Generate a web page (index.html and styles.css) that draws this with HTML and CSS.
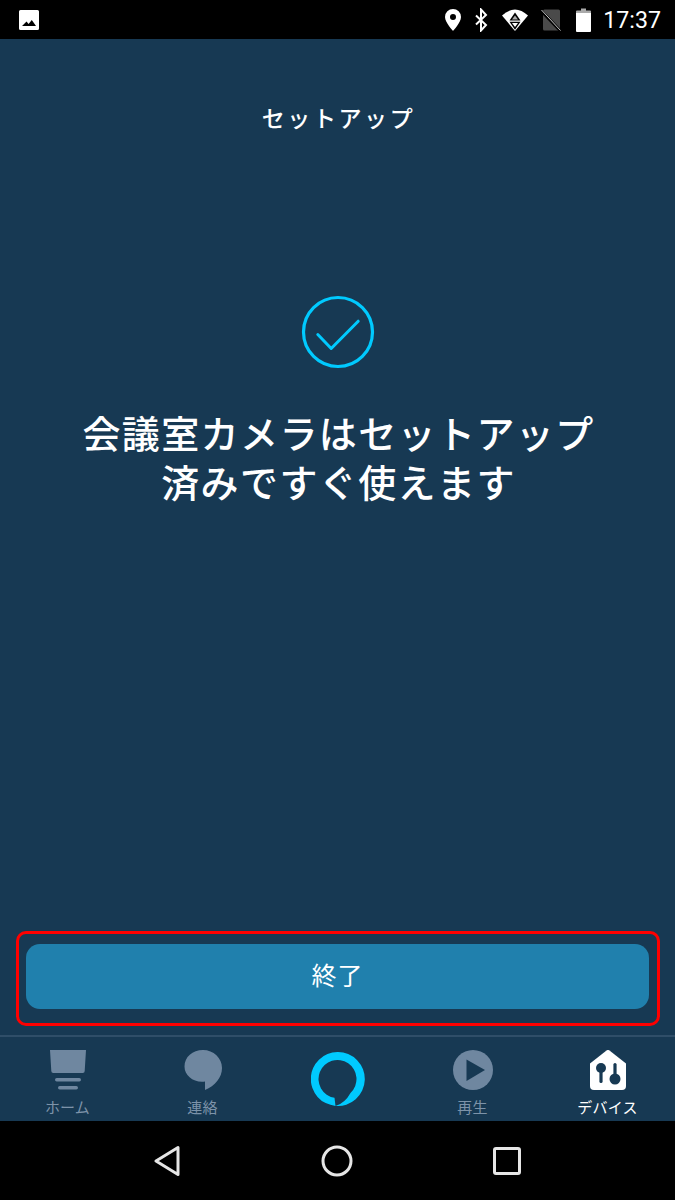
FILE: index.html
```html
<!DOCTYPE html>
<html lang="ja">
<head>
    <meta charset="UTF-8">
    <meta name="viewport" content="width=device-width, initial-scale=1.0">
    <title>セットアップ</title>
    <link rel="stylesheet" href="styles.css">
</head>
<body>

    <!-- Status bar -->
    <div class="status-bar">
        <svg class="status-photo" width="22" height="22" viewBox="0 0 22 22">
            <path fill="#fff" fill-rule="evenodd" d="M2.500 1h17A1.500 1.500 0 0 1 21 2.500v17a1.500 1.500 0 0 1-1.500 1.500h-17A1.500 1.500 0 0 1 1 19.500v-17A1.500 1.500 0 0 1 2.500 1zM4 17h14l-4.200-6-3.200 4-2.100-2.500z"/>
        </svg>
        <div class="status-right">
            <svg width="18" height="24" viewBox="0 0 18 24">
                <path fill="#fff" fill-rule="evenodd" d="M9 1a8 8 0 0 1 8 8c0 5.500-8 14-8 14S1 14.500 1 9a8 8 0 0 1 8-8zm0 5a3 3 0 1 0 0 6 3 3 0 0 0 0-6z"/>
            </svg>
            <svg width="18" height="24" viewBox="0 0 18 24">
                <path fill="none" stroke="#fff" stroke-width="2" d="M4 7.500l10 9.500-5 5.500V1.500l5 5.500L4 16.500"/>
            </svg>
            <svg width="30" height="24" viewBox="0 0 30 24">
                <path fill="#fff" d="M2 7.500Q15-4.500 28 7.500L15 23z"/>
                <path fill="#000" d="M15 4.500l5.500 8h-11zM9.500 13.800h11l-5.500 8z"/>
                <path fill="#aaa" d="M15 7.500l3 4h-6z"/>
                <path fill="#fff" d="M12 15h6l-3 4z"/>
            </svg>
            <svg width="21" height="24" viewBox="0 0 21 24">
                <rect x="3" y="1.500" width="17" height="21" rx="1.500" fill="#4a4a4a"/>
                <path stroke="#000" stroke-width="3" d="M0 1.500l21 22"/>
                <path stroke="#ccc" stroke-width="1" d="M1.500 2l19 20.500"/>
            </svg>
            <svg width="22" height="24" viewBox="0 0 22 24">
                <path fill="#aaa" d="M10 .5h5v2h4a1 1 0 0 1 1 1V6H5V3.500a1 1 0 0 1 1-1h4z"/>
                <path fill="#fff" d="M5 5h15v18a1 1 0 0 1-1 1H6a1 1 0 0 1-1-1z"/>
            </svg>
            <span class="status-time">17:37</span>
        </div>
    </div>

    <!-- Setup finished screen -->
    <div class="main-screen">
        <div class="page-title">セットアップ</div>

        <svg class="check-icon" width="74" height="74" viewBox="0 0 74 74">
            <circle cx="37" cy="37" r="34.500" fill="none" stroke="#00caff" stroke-width="3.200"/>
            <path fill="none" stroke="#00caff" stroke-width="3" stroke-linecap="round" stroke-linejoin="round" d="M16.800 39.500l13.400 14 27-27.300"/>
        </svg>

        <h1 class="headline">会議室カメラはセットアップ<br>済みですぐ使えます</h1>

        <div class="finish-area">
            <div class="finish-outline">
                <button class="finish-btn" type="button">終了</button>
            </div>
        </div>

        <!-- Bottom tabs -->
        <div class="tab-bar">
            <div class="tab">
                <svg width="38" height="42" viewBox="0 0 38 42">
                    <path fill="#6f87a0" d="M1 0h36l-1.300 21a2 2 0 0 1-2 2H4.300a2 2 0 0 1-2-2z"/>
                    <rect x="6" y="28" width="26" height="3.500" rx="1.700" fill="#6f87a0"/>
                    <rect x="9" y="36" width="20" height="3.500" rx="1.700" fill="#6f87a0"/>
                </svg>
                <span class="tab-label">ホーム</span>
            </div>
            <div class="tab">
                <svg width="38" height="42" viewBox="0 -1 38 42">
                    <path fill="#6f87a0" d="M19-1C29.500-1 38 7 38 17 38 26.500 31 35 21 39V30.500C10 32 .5 25 .5 15.500.5 6 8.500-1 19-1z"/>
                </svg>
                <span class="tab-label">連絡</span>
            </div>
            <div class="tab tab-alexa">
                <svg width="54" height="54" viewBox="0.500 0 54 54">
                    <path fill="#00caff" fill-rule="evenodd" d="M27 0a27 27 0 1 1-2 53.900L24 45.800A19 19 0 1 1 40 40.900Q34.500 51 25 53.900A27 27 0 0 1 27 0z"/>
                </svg>
            </div>
            <div class="tab">
                <svg width="40" height="42" viewBox="0 0 40 42">
                    <circle cx="20" cy="20" r="20" fill="#6f87a0"/>
                    <path fill="#173953" d="M13.500 9.500L32 20 13.500 31z"/>
                </svg>
                <span class="tab-label">再生</span>
            </div>
            <div class="tab tab-active">
                <svg width="38" height="42" viewBox="0 0 38 42">
                    <path fill="#fff" d="M17.500.5a2.500 2.500 0 0 1 3 0L37 13.500V36a4 4 0 0 1-4 4H5a4 4 0 0 1-4-4V13.500z"/>
                    <circle cx="12" cy="18" r="5" fill="#173953"/>
                    <rect x="10.400" y="18" width="3.200" height="15" rx="1.600" fill="#173953"/>
                    <circle cx="26" cy="29" r="5.500" fill="#173953"/>
                    <rect x="24.400" y="13" width="3.200" height="16" rx="1.600" fill="#173953"/>
                </svg>
                <span class="tab-label">デバイス</span>
            </div>
        </div>
    </div>

    <!-- Android nav buttons -->
    <div class="nav-bar">
        <svg width="26" height="32" viewBox="0 0 26 32">
            <path fill="none" stroke="#e6e6e6" stroke-width="3" stroke-linejoin="round" d="M24 2.500v27L2 16z"/>
        </svg>
        <svg width="32" height="32" viewBox="0 0 32 32">
            <circle cx="16" cy="16" r="14" fill="none" stroke="#e6e6e6" stroke-width="3"/>
        </svg>
        <svg width="28" height="28" viewBox="0 0 28 28">
            <rect x="1.500" y="1.500" width="25" height="25" rx="1.500" fill="none" stroke="#e6e6e6" stroke-width="3"/>
        </svg>
    </div>

</body>
</html>
```

FILE: styles.css
```css
body {
    font-family: Roboto, "Noto Sans CJK JP", sans-serif;
    margin: 0;
    padding: 0;
    width: 675px;
    height: 1200px;
    display: flex;
    flex-direction: column;
    overflow: hidden;
    background-color: #000;
}

svg {
    display: block;
}

.status-bar {
    height: 39px;
    flex: none;
    display: flex;
    align-items: center;
    justify-content: space-between;
    padding: 0 14px 0 18px;
    background-color: #000;
}

.status-right {
    display: flex;
    align-items: center;
    gap: 10px;
}

.status-time {
    color: #fff;
    font-size: 23.200px;
}

.main-screen {
    flex: 1;
    display: flex;
    flex-direction: column;
    align-items: center;
    background-color: #173953;
}

.page-title {
    margin-top: 64px;
    padding-left: 2px;
    color: #fff;
    font-size: 23px;
    font-weight: 500;
    letter-spacing: 2.600px;
    line-height: 34px;
}

.check-icon {
    margin-top: 158px;
}

.headline {
    margin: 42px 0 0;
    padding-left: 2px;
    color: #fff;
    font-size: 38px;
    font-weight: 500;
    letter-spacing: 1.400px;
    line-height: 49px;
    text-align: center;
}

.finish-area {
    margin-top: auto;
    width: 100%;
    box-sizing: border-box;
    padding: 0 15px 9px 16px;
}

.finish-outline {
    border: 3px solid #f00;
    border-radius: 10px;
    padding: 10px 8px 14px 7px;
}

.finish-btn {
    display: block;
    width: 100%;
    height: 65px;
    padding: 0 0 6px;
    border: none;
    border-radius: 14px;
    background-color: #2080ad;
    color: #fff;
    font-family: inherit;
    font-size: 25px;
    letter-spacing: 1px;
}

.tab-bar {
    width: 100%;
    height: 84px;
    flex: none;
    display: flex;
    justify-content: space-around;
    border-top: 2px solid #2f4e68;
}

.tab {
    width: 135px;
    display: flex;
    flex-direction: column;
    align-items: center;
    padding-top: 13px;
}

.tab-alexa {
    padding-top: 15px;
}

.tab-label {
    color: #7d93a9;
    font-size: 15px;
    line-height: 22px;
    letter-spacing: 0.200px;
    margin-top: 5px;
}

.tab-active .tab-label {
    color: #fff;
}

.nav-bar {
    height: 79px;
    flex: none;
    display: flex;
    align-items: center;
    justify-content: center;
    gap: 140.500px;
    background-color: #000;
}
```
